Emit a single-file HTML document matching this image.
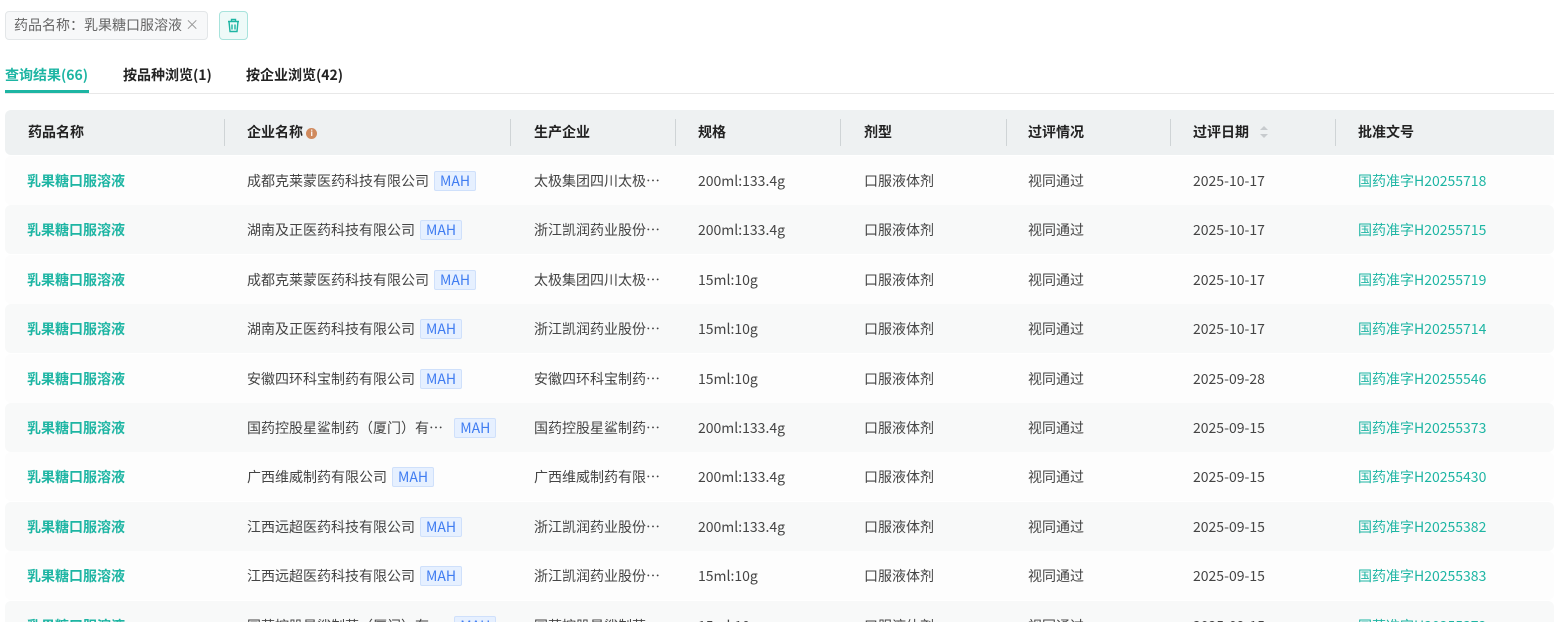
<!DOCTYPE html>
<html><head><meta charset="utf-8"><style>
html,body{margin:0;width:1554px;height:622px;overflow:hidden}
body{background:#fff;font-family:"Noto Sans CJK SC","Liberation Sans",sans-serif;font-size:14px;color:#333;position:relative}
.a{position:absolute;white-space:nowrap}
.tag{left:5px;top:11px;width:203px;height:29px;border:1px solid #e3e6e8;border-radius:4px;background:#f7f8f9;box-sizing:border-box;color:#666;line-height:27px;padding-left:8px;font-size:14px}
.del{left:219px;top:11px;width:29px;height:29px;border:1px solid #a8e3dc;background:#eefaf8;border-radius:4px;box-sizing:border-box}
.tab{top:64px;font-size:14px;font-weight:bold;color:#222;line-height:22px}
.hdr{left:5px;top:110px;width:1549px;height:45px;background:#eef1f2;border-radius:6px 0 0 6px}
.h{top:110px;line-height:45px;font-weight:bold;color:#222}
.sep{top:119px;width:1px;height:27px;background:#cfd4d6}
.row{left:5px;width:1549px;height:49px;border-radius:6px}
.c{line-height:20px;color:#444}
.g{color:#1db5a3}
.b{font-weight:bold}
.mah{display:inline-block;margin-left:5px;padding:0 5px;height:18px;line-height:18px;background:#e6f0ff;border:1px solid #cfe0fb;color:#3f7cf1;border-radius:2px;font-size:14px}
</style></head><body>
<div class="a tag">药品名称：乳果糖口服溶液 <span style="color:#999">×</span></div>
<div class="a del"><svg width="27" height="27" viewBox="0 0 26 27"><g fill="none" stroke="#1db5a3" stroke-width="1.4"><path d="M7.5 9.5h11M11 9.5V7.5h4v2M8.5 9.5l1 10h7l1-10M11.5 12.5v5M14.5 12.5v5"/></g></svg></div>
<div class="a tab" style="left:5px;color:#1db5a3">查询结果(66)</div>
<div class="a" style="left:5px;top:90px;width:84px;height:3px;background:#1db5a3"></div>
<div class="a tab" style="left:123px">按品种浏览(1)</div>
<div class="a tab" style="left:246px">按企业浏览(42)</div>
<div class="a" style="left:5px;top:93px;width:1549px;height:1px;background:#e8e8e8"></div>
<div class="a hdr"></div>
<div class="a h" style="left:28px">药品名称</div>
<div class="a h" style="left:247px">企业名称 <span style="display:inline-block;width:11px;height:11px;border-radius:50%;background:#d08a5e;color:#fff;font-size:8px;line-height:11px;text-align:center;vertical-align:1px">i</span></div>
<div class="a h" style="left:534px">生产企业</div>
<div class="a h" style="left:698px">规格</div>
<div class="a h" style="left:864px">剂型</div>
<div class="a h" style="left:1028px">过评情况</div>
<div class="a h" style="left:1193px">过评日期 <svg width="12" height="16" viewBox="0 0 12 16" style="vertical-align:-3px;margin-left:6px"><path d="M6 2l4 4H2z" fill="#c7cbce"/><path d="M6 14l4-4H2z" fill="#c7cbce"/></svg></div>
<div class="a h" style="left:1358px">批准文号</div>
<div class="a sep" style="left:224px"></div><div class="a sep" style="left:510px"></div><div class="a sep" style="left:675px"></div><div class="a sep" style="left:840px"></div><div class="a sep" style="left:1006px"></div><div class="a sep" style="left:1170px"></div><div class="a sep" style="left:1335px"></div>
<div id="rows"></div>
<script>
var d=[["成都克莱蒙医药科技有限公司","太极集团四川太极…","200ml:133.4g","2025-10-17","H20255718"],
["湖南及正医药科技有限公司","浙江凯润药业股份…","200ml:133.4g","2025-10-17","H20255715"],
["成都克莱蒙医药科技有限公司","太极集团四川太极…","15ml:10g","2025-10-17","H20255719"],
["湖南及正医药科技有限公司","浙江凯润药业股份…","15ml:10g","2025-10-17","H20255714"],
["安徽四环科宝制药有限公司","安徽四环科宝制药…","15ml:10g","2025-09-28","H20255546"],
["国药控股星鲨制药（厦门）有…&nbsp;&nbsp;","国药控股星鲨制药…","200ml:133.4g","2025-09-15","H20255373"],
["广西维威制药有限公司","广西维威制药有限…","200ml:133.4g","2025-09-15","H20255430"],
["江西远超医药科技有限公司","浙江凯润药业股份…","200ml:133.4g","2025-09-15","H20255382"],
["江西远超医药科技有限公司","浙江凯润药业股份…","15ml:10g","2025-09-15","H20255383"],
["国药控股星鲨制药（厦门）有…&nbsp;&nbsp;","国药控股星鲨制药…","15ml:10g","2025-09-15","H20255372"]];
var h="";
for(var i=0;i<d.length;i++){var t=156+i*49.4,y=t+15;var r=d[i];
h+='<div class="a row" style="top:'+t+'px;background:'+(i%2?'#f8f9f9':'#fdfdfd')+'"></div>';
h+='<div class="a c g b" style="left:27px;top:'+y+'px">乳果糖口服溶液</div>';
h+='<div class="a c" style="left:247px;top:'+y+'px">'+r[0]+'<span class="mah">MAH</span></div>';
h+='<div class="a c" style="left:534px;top:'+y+'px">'+r[1]+'</div>';
h+='<div class="a c" style="left:698px;top:'+y+'px">'+r[2]+'</div>';
h+='<div class="a c" style="left:864px;top:'+y+'px">口服液体剂</div>';
h+='<div class="a c" style="left:1028px;top:'+y+'px">视同通过</div>';
h+='<div class="a c" style="left:1193px;top:'+y+'px">'+r[3]+'</div>';
h+='<div class="a c g" style="left:1358px;top:'+y+'px">国药准字'+r[4]+'</div>';}
document.getElementById("rows").innerHTML=h;
</script>
</body></html>
